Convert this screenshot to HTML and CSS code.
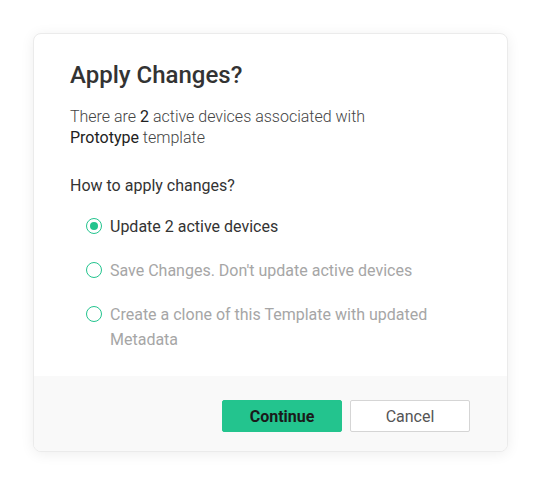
FILE: index.html
```html
<!DOCTYPE html>
<html lang="en">
<head>
    <meta charset="UTF-8">
    <title>Apply Changes?</title>
    <link rel="stylesheet" href="styles.css">
</head>
<body>
    <div class="modal">
        <div class="modal-body">
            <h2 class="modal-title">Apply Changes?</h2>
            <p class="desc">There are <b>2</b> active devices associated with <b>Prototype</b> template</p>
            <p class="question">How to apply changes?</p>
            <div class="options">
                <label class="option active">
                    <span class="radio checked"></span>
                    <span class="label">Update 2 active devices</span>
                </label>
                <label class="option">
                    <span class="radio"></span>
                    <span class="label">Save Changes. Don't update active devices</span>
                </label>
                <label class="option">
                    <span class="radio"></span>
                    <span class="label">Create a clone of this Template with updated Metadata</span>
                </label>
            </div>
        </div>
        <div class="modal-footer">
            <button class="btn btn-primary">Continue</button>
            <button class="btn btn-default">Cancel</button>
        </div>
    </div>
</body>
</html>
```
FILE: styles.css
```css
body {
    margin: 0;
    padding: 33px;
    background: #fff;
    font-family: Roboto, "Liberation Sans", sans-serif;
    color: #333;
}
.modal {
    width: 475px;
    border: 1px solid #ebebeb;
    border-radius: 8px;
    background: #fff;
    box-shadow: 0 2px 14px rgba(0, 0, 0, 0.07);
    overflow: hidden;
    box-sizing: border-box;
}
.modal-body {
    padding: 27px 36px 24px 36px;
}
.modal-title {
    margin: 0;
    font-size: 24px;
    font-weight: 500;
    line-height: 28px;
    color: #333;
}
.desc {
    margin: 17px 0 0 0;
    font-size: 16px;
    font-weight: 300;
    line-height: 21px;
    color: #444;
    width: 310px;
}
.desc b {
    font-weight: 400;
    color: #222;
}
.question {
    margin: 27px 0 0 0;
    font-size: 16px;
    line-height: 21px;
}
.options {
    margin-top: 18px;
    padding-left: 16px;
}
.option {
    display: flex;
    align-items: flex-start;
    gap: 8px;
    margin-bottom: 19px;
    font-size: 16px;
    line-height: 25px;
    color: #a6a6a6;
}
.option:last-child {
    margin-bottom: 0;
}
.option.active {
    color: #333;
}
.radio {
    flex: none;
    width: 16px;
    height: 16px;
    margin-top: 4px;
    border: 1.5px solid #23c48e;
    border-radius: 50%;
    box-sizing: border-box;
    position: relative;
}
.radio.checked::after {
    content: "";
    position: absolute;
    left: 2.5px;
    top: 2.5px;
    width: 8px;
    height: 8px;
    border-radius: 50%;
    background: #23c48e;
}
.modal-footer {
    background: #f9f9f9;
    padding: 24px 37px 19px 0;
    display: flex;
    justify-content: flex-end;
    gap: 8px;
}
.btn {
    width: 120px;
    height: 32px;
    border-radius: 2px;
    font-family: Roboto, "Liberation Sans", sans-serif;
    font-size: 16px;
}
.btn-primary {
    background: #23c48e;
    border: 1px solid #23c48e;
    color: #1a1a1a;
    font-weight: 700;
}
.btn-default {
    background: #fff;
    border: 1px solid #d5d5d5;
    color: #555;
}
```
